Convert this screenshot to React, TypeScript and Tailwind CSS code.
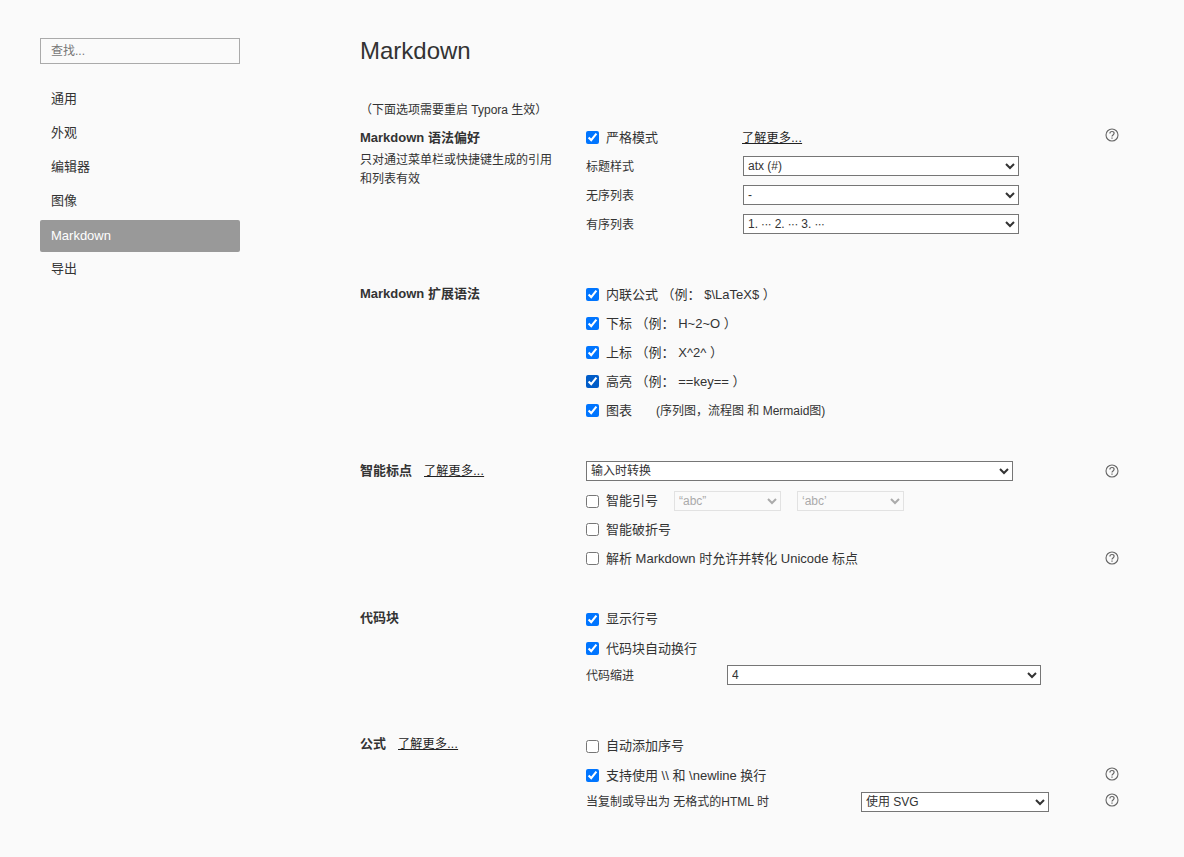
import React from "react";

const Help = ({ className }: { className?: string }) => (
  <svg width="14" height="14" viewBox="0 0 14 14" fill="none" stroke="#666" strokeWidth="1.1" className={`shrink-0 ${className ?? ""}`}>
    <circle cx="7" cy="7" r="6" />
    <path d="M4.9 5.4C4.9 4.2 5.8 3.5 7 3.5s2.1.8 2.1 1.8c0 1.6-2.1 1.6-2.1 3.2" strokeWidth="1.2" />
    <path d="M7 9.6v1.2" strokeWidth="1.2" />
  </svg>
);

const Check = ({ checked, label, dark }: { checked?: boolean; label: React.ReactNode; dark?: boolean }) => (
  <label className="flex items-center gap-[7px] text-[13px]">
    <input
      type="checkbox"
      defaultChecked={checked}
      className={`w-[13px] h-[13px] ${dark ? "accent-[#005cc8]" : "accent-[#0075ff]"}`}
    />
    <span>{label}</span>
  </label>
);

const Select = ({ value, className }: { value: string; className: string }) => (
  <select
    defaultValue={value}
    className={`h-5 text-[12px] bg-white border border-[#767676] text-[#333] ${className}`}
  >
    <option>{value}</option>
  </select>
);

const Row = ({ children, help, helpClass, h = "h-[29px]" }: { children: React.ReactNode; help?: boolean; helpClass?: string; h?: string }) => (
  <div className={`flex items-center justify-between ${h}`}>
    <div className="flex items-center min-w-0">{children}</div>
    {help && <Help className={helpClass} />}
  </div>
);

const More = () => <a className="underline text-[12px] tracking-[0.3px] text-[#222] font-normal">了解更多...</a>;

const Section = ({ title, desc, children, className, titleH = "h-[29px]" }: { title: React.ReactNode; desc?: React.ReactNode; children: React.ReactNode; className?: string; titleH?: string }) => (
  <section className={`grid grid-cols-[226px_533px] ${className ?? ""}`}>
    <div>
      <div className={`flex items-center text-[13px] font-bold text-[#333] gap-3 ${titleH}`}>{title}</div>
      {desc && <p className="text-[12px] leading-[19px] w-[200px] -mt-[1px]">{desc}</p>}
    </div>
    <div>{children}</div>
  </section>
);

const navItems = ["通用", "外观", "编辑器", "图像", "Markdown", "导出"];

export default function App() {
  return (
    <div
      className="flex min-h-[857px] bg-[#fafafa] text-[#333]"
      style={{ fontFamily: '"Liberation Sans", "Noto Sans CJK SC", sans-serif' }}
    >
      <aside className="w-[360px] shrink-0 pl-10 pt-[38px]">
        <input
          placeholder="查找..."
          className="block w-[200px] h-[26px] border border-[#aaa] bg-transparent px-[10px] text-[12px] placeholder:text-[#777] outline-none"
        />
        <nav className="mt-5 w-[200px] flex flex-col gap-[2px]">
          {navItems.map((n) => (
            <div
              key={n}
              className={`h-8 flex items-center px-[11px] text-[13px] rounded-[2px] ${
                n === "Markdown" ? "bg-[#999] text-white" : "text-[#333] pb-[2px]"
              }`}
            >
              {n}
            </div>
          ))}
        </nav>
      </aside>
      <main className="flex-1 pt-9">
        <h1 className="text-[24px] leading-[30px] text-[#333]">Markdown</h1>
        <p className="text-[12px] leading-[18px] mt-[35px] h-[22px]">（下面选项需要重启 Typora 生效）</p>
        <Section
          title="Markdown 语法偏好"
          desc={<>只对通过菜单栏或快捷键生成的引用和列表有效</>}
        >
          <Row help helpClass="mb-[5px]">
            <div className="w-[156px]"><Check checked label="严格模式" /></div>
            <More />
          </Row>
          <Row>
            <span className="w-[157px] text-[12px]">标题样式</span>
            <Select value="atx (#)" className="w-[276px] mb-[2px]" />
          </Row>
          <Row>
            <span className="w-[157px] text-[12px]">无序列表</span>
            <Select value="-" className="w-[276px] mb-[2px]" />
          </Row>
          <Row>
            <span className="w-[157px] text-[12px]">有序列表</span>
            <Select value="1. ∙∙∙ 2. ∙∙∙ 3. ∙∙∙" className="w-[276px] mb-[2px]" />
          </Row>
        </Section>

        <Section title="Markdown 扩展语法" className="mt-[41px]" titleH="h-[27px]">
          <Row><Check checked label="内联公式 （例： $\LaTeX$ ）" /></Row>
          <Row><Check checked label="下标 （例： H~2~O ）" /></Row>
          <Row><Check checked label="上标 （例： X^2^ ）" /></Row>
          <Row><Check checked dark label="高亮 （例： ==key== ）" /></Row>
          <Row>
            <Check checked label="图表" />
            <span className="ml-6 text-[12px]">(序列图，流程图 和 Mermaid图)</span>
          </Row>
        </Section>

        <Section title={<><span>智能标点</span><More /></>} className="mt-8" titleH="h-[27px]">
          <Row help helpClass="mb-[2px]" h="h-[30px]"><Select value="输入时转换" className="w-[427px] mb-[2px]" /></Row>
          <Row h="h-[28px]">
            <Check label="智能引号" />
            <select
              disabled
              defaultValue="“abc”"
              className="h-5 w-[107px] ml-4 text-[12px] border border-[#e2e2e2] bg-[#fafafa] text-[#aaa]"
            >
              <option>“abc”</option>
            </select>
            <select
              disabled
              defaultValue="‘abc’"
              className="h-5 w-[107px] ml-4 text-[12px] border border-[#e2e2e2] bg-[#fafafa] text-[#aaa]"
            >
              <option>‘abc’</option>
            </select>
          </Row>
          <Row><Check label="智能破折号" /></Row>
          <Row help helpClass="mb-[1px]"><Check label="解析 Markdown 时允许并转化 Unicode 标点" /></Row>
        </Section>

        <Section title="代码块" className="mt-[31px]" titleH="h-[27px]">
          <Row h="h-[30px]"><Check checked label="显示行号" /></Row>
          <Row><Check checked label="代码块自动换行" /></Row>
          <Row h="h-[25px]">
            <span className="w-[141px] text-[12px]">代码缩进</span>
            <Select value="4" className="w-[314px] mb-[2px]" />
          </Row>
        </Section>

        <Section title={<><span>公式</span><More /></>} className="mt-[43px]" titleH="h-[26px]">
          <Row h="h-[30px]"><Check label="自动添加序号" /></Row>
          <Row help helpClass="mb-[3px]"><Check checked label="支持使用 \\ 和 \newline 换行" /></Row>
          <Row help helpClass="mb-[3px]" h="h-[23px]">
            <span className="w-[275px] text-[12px]">当复制或导出为 无格式的HTML 时</span>
            <Select value="使用 SVG" className="w-[188px]" />
          </Row>
        </Section>
      </main>
    </div>
  );
}
